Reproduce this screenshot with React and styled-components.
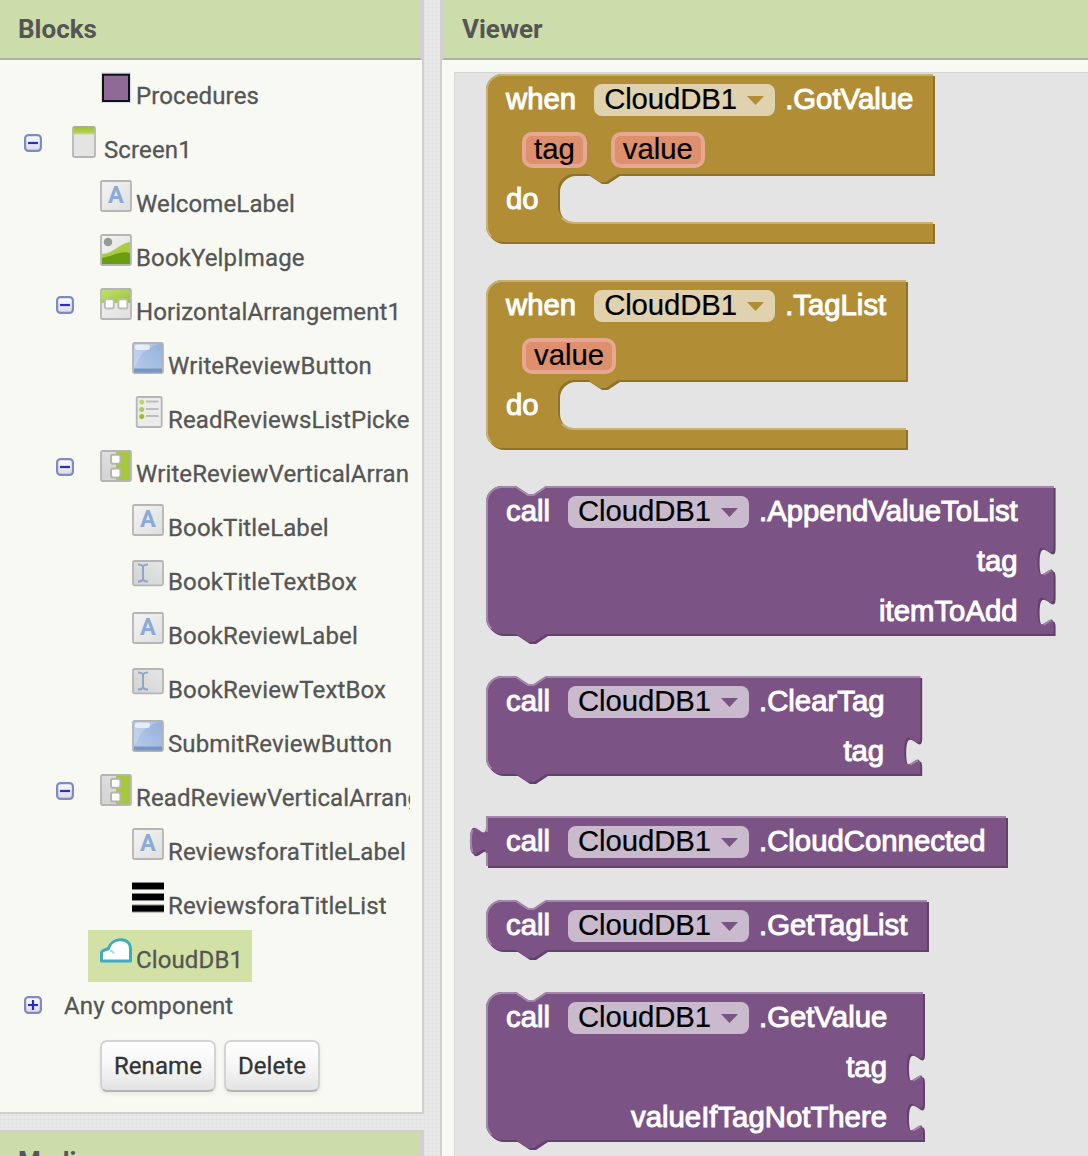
import React from "react";
import styled, { createGlobalStyle } from "styled-components";

const Global = createGlobalStyle`
  * { box-sizing: border-box; }
  body { margin: 0; background: #e8e8e8; }
`;

const Page = styled.div`
  width: 1088px;
  height: 1156px;
  overflow: hidden;
  display: flex;
  gap: 16px;
  font-family: Roboto, "Liberation Sans", sans-serif;
  color: #555;
  background-color: #e9e9e9;
  background-image:
    repeating-linear-gradient(90deg, rgba(0, 0, 0, 0.025) 0 1px, transparent 1px 4px),
    repeating-linear-gradient(0deg, rgba(0, 0, 0, 0.025) 0 1px, transparent 1px 4px);
`;

const Sidebar = styled.div`
  width: 424px;
  flex: none;
  display: flex;
  flex-direction: column;
  gap: 16px;
`;

const BlocksPanel = styled.section`
  height: 1114px;
  flex: none;
  display: flex;
  flex-direction: column;
  background: #f8f9f3;
  border-right: 2px solid #d0d0d0;
  border-bottom: 2px solid #d0d0d0;
`;

const MediaPanel = styled.section`
  height: 100px;
  flex: none;
  border-top: 2px solid #d0d0d0;
  border-right: 2px solid #d0d0d0;
`;

const ViewerPanel = styled.section`
  flex: 1;
  display: flex;
  flex-direction: column;
  background: #f8f9f3;
  border-left: 2px solid #d0d0d0;
`;

const PanelTitle = styled.h2`
  margin: 0;
  flex: none;
  height: 60px;
  padding-left: 18px;
  background: #ccddab;
  border-bottom: 2px solid #aeb1a6;
  border-right: ${(p) => (p.$side === "right" ? "2px solid #d0d0d0" : "0")};
  border-left: ${(p) => (p.$side === "left" ? "2px solid #d0d0d0" : "0")};
  font-size: 26px;
  font-weight: 700;
  line-height: 58px;
`;

const Tree = styled.div`
  width: 410px;
  padding-top: 5px;
  overflow: hidden;
`;

const TreeRow = styled.div`
  display: flex;
  height: ${(p) => (p.$plain ? 46 : 54)}px;
  padding-left: ${(p) => 24 + 32 * p.$depth}px;
`;

const ToggleSlot = styled.div`
  flex: none;
  width: 32px;
  padding-top: ${(p) => (p.$plain ? 13 : 15)}px;
  line-height: 0;
`;

const TreeItem = styled.div`
  flex: none;
  display: flex;
  gap: 4px;
  height: ${(p) => (p.$plain ? 46 : 52)}px;
  margin-top: 1px;
  padding: 0 9px 0 ${(p) => (p.$plain ? 8 : 12)}px;
  background: ${(p) => (p.$selected ? "#d2e1a6" : "transparent")};
`;

const IconBox = styled.svg`
  flex: none;
  display: block;
  width: 32px;
  height: 32px;
  margin-top: 6px;
`;

const ItemText = styled.span`
  font-size: 24px;
  line-height: 28px;
  letter-spacing: 0.12px;
  -webkit-text-stroke: 0.3px #555;
  padding-top: ${(p) => (p.$plain ? 8 : 16)}px;
  white-space: nowrap;
`;

const Buttons = styled.div`
  display: flex;
  gap: 8px;
  padding: 11px 0 0 100px;
`;

const Button = styled.button`
  height: 52px;
  width: ${(p) => p.$width}px;
  padding: 0;
  border: 2px solid #d3d3d1;
  border-bottom-color: #b4b4b2;
  border-radius: 7px;
  background: linear-gradient(#ffffff, #f6f6f6 50%, #e3e3e3);
  box-shadow: 0 2px 4px rgba(0, 0, 0, 0.07);
  color: #333;
  font: 400 24px Roboto, sans-serif;
  letter-spacing: 0.1px;
  -webkit-text-stroke: 0.3px #333;
  text-align: center;
`;

const Workspace = styled.div`
  flex: 1;
  position: relative;
  margin: 12px 0 0 12px;
  overflow: hidden;
  background: #e4e4e4;
  border-top: 1px solid #d6d6d6;
  border-left: 1px solid #d6d6d6;
`;

/* Blocks float freely on the workspace canvas. */
const BlockFrame = styled.div`
  position: absolute;
  left: 31px;
  top: ${(p) => p.$top}px;
  width: ${(p) => p.$width}px;
  font-family: "Liberation Sans", Arial, sans-serif;
  font-size: 29.33px;
  color: #fff;
`;

const BlockShape = styled.svg`
  position: absolute;
  left: -20px;
  top: 0;
  overflow: visible;
`;

const BlockRow = styled.div`
  position: relative;
  display: flex;
  height: 50px;
  line-height: 50px;
  padding-left: ${(p) => (p.$params ? 36 : 20)}px;
  padding-right: ${(p) => (p.$input ? 36 : 0)}px;
  justify-content: ${(p) => (p.$input ? "flex-end" : "flex-start")};
  gap: ${(p) => (p.$params ? 24 : 0)}px;
`;

const BlockLabel = styled.span`
  white-space: pre;
  -webkit-text-stroke: 1px #fff;
`;

const Dropdown = styled.span`
  flex: none;
  display: flex;
  align-items: center;
  justify-content: space-between;
  width: 181px;
  height: 32px;
  margin: 10px 10px 0 18px;
  padding: 0 11px 0 10px;
  border-radius: 8px;
  background: rgba(255, 255, 255, 0.6);
  color: #000;
  line-height: 30px;
`;

const DropdownText = styled.span`
  height: 32px;
  letter-spacing: -0.1px;
  -webkit-text-stroke: 0.2px #000;
`;

const Arrow = styled.svg`
  display: block;
  margin-top: 1px;
  fill: ${(p) => p.$fill};
`;

const Param = styled.span`
  height: 36px;
  margin-top: 8px;
  padding: 0 8px;
  border: 4px solid #e7a893;
  border-radius: 10px;
  background: #de8f6c;
  background-clip: padding-box;
  color: #000;
  line-height: 26px;
  -webkit-text-stroke: 0.2px #000;
`;

const gold = { main: "#b18e35", dark: "#8e722a", light: "#c8b072" };
const purple = { main: "#7c5385", dark: "#63426a", light: "#a387aa" };

function Shape({ kind, w, inputs, colors }) {
  let body;
  let light;
  if (kind === "event") {
    body = `M0,8A8,8 0 0 1 8,0H${w}V50H66l-6,4 -3,0 -6,-4h-7a8,8 0 0 0 -8,8v8a8,8 0 0 0 8,8H${w}V84H8a8,8 0 0 1 -8,-8z`;
    light = `M.5,7.5A7.5,7.5 0 0 1 8,.5H${w}M38,72A8.5,8.5 0 0 0 44,74.5H${w}M2.7,81.3A7.5,7.5 0 0 1 .5,76V7.5`;
  } else if (kind === "value") {
    body = `M0,0H${w}V25H0V20c0,-10 -8,8 -8,-7.5s8,2.5 8,-7.5z`;
    light = `M0,.5H${w}M.5,25V18.5m-7.36,-.5q-1.52,-5.5 0,-11m7.36,1V.5`;
  } else {
    const h = inputs ? 24 + 25 * inputs : 25;
    let tabs = "";
    let glints = "";
    for (let i = 1; i <= inputs; i += 1) {
      tabs += `V${25 * i + 5}c0,10 -8,-8 -8,7.5s8,-2.5 8,7.5`;
      glints += `M${w - 5},${25 * i + 19.3}l3.68,-2.1`;
    }
    body = `M0,8A8,8 0 0 1 8,0H15l6,4 3,0 6,-4H${w}${tabs}V${h}H30l-6,4 -3,0 -6,-4H8a8,8 0 0 1 -8,-8z`;
    light = `M.5,7.5A7.5,7.5 0 0 1 8,.5H15l6,4 3,0 6,-4H${w}${glints}M2.7,${h - 2.7}A7.5,7.5 0 0 1 .5,${h - 8}V7.5`;
  }
  return (
    <BlockShape width={w * 2 + 24} height="178" aria-hidden="true">
      <g transform="translate(20 0) scale(2)">
        <path d={body} fill={colors.dark} transform="translate(1 1)" />
        <path d={body} fill={colors.main} />
        <path d={light} fill="none" stroke={colors.light} strokeWidth="1" />
      </g>
    </BlockShape>
  );
}

function Block({ top, w, kind, method, params, inputs = [] }) {
  const isEvent = kind === "event";
  const colors = isEvent ? gold : purple;
  return (
    <BlockFrame $top={top - 73} $width={w * 2}>
      <Shape kind={kind} w={w} inputs={inputs.length} colors={colors} />
      <BlockRow>
        <BlockLabel>{isEvent ? "when" : "call"}</BlockLabel>
        <Dropdown>
          <DropdownText>CloudDB1</DropdownText>
          <Arrow width="17" height="9" $fill={colors.main}>
            <path d="M0 0H17L8.5 9z" />
          </Arrow>
        </Dropdown>
        <BlockLabel>{method}</BlockLabel>
      </BlockRow>
      {params && (
        <BlockRow $params>
          {params.map((p) => (
            <Param key={p}>{p}</Param>
          ))}
        </BlockRow>
      )}
      {isEvent && (
        <BlockRow>
          <BlockLabel>do</BlockLabel>
        </BlockRow>
      )}
      {inputs.map((name) => (
        <BlockRow key={name} $input>
          <BlockLabel>{name}</BlockLabel>
        </BlockRow>
      ))}
    </BlockFrame>
  );
}

function Toggle({ open }) {
  return (
    <svg width="18" height="18" viewBox="0 0 18 18">
      <rect x="1.100" y="1.100" width="15.800" height="15.800" rx="3.500" fill="url(#toggleFill)" stroke="#7d8ac4" strokeWidth="2.200" />
      <path d={open ? "M4 9H14" : "M4 9H14M9 4V14"} stroke="#2b2bd6" strokeWidth="2.200" />
    </svg>
  );
}

const Tile = ({ x = 1, y = 1, w = 30, h = 30, fill = "url(#tile)" }) => (
  <rect x={x} y={y} width={w} height={h} rx="1.5" fill={fill} stroke="#b5b5b5" strokeWidth="1.8" />
);

function IconDefs() {
  return (
    <svg width="0" height="0" style={{ display: "block" }} aria-hidden="true">
      <defs>
        <linearGradient id="toggleFill" x1="0" y1="0" x2="0" y2="1">
          <stop offset="0" stopColor="#fff" />
          <stop offset="1" stopColor="#d9d9e0" />
        </linearGradient>
        <linearGradient id="tile" x1="0" y1="0" x2="1" y2="1">
          <stop offset="0" stopColor="#f4f4f4" />
          <stop offset="1" stopColor="#dedede" />
        </linearGradient>
        <linearGradient id="tileGrey" x1="0" y1="1" x2="1" y2="0">
          <stop offset="0" stopColor="#d2d2d2" />
          <stop offset="1" stopColor="#e6e6e6" />
        </linearGradient>
        <linearGradient id="screenTop" x1="0" y1="0" x2="0" y2="1">
          <stop offset="0" stopColor="#a0c52f" />
          <stop offset=".6" stopColor="#afcf52" />
          <stop offset="1" stopColor="#e4e4e4" />
        </linearGradient>
        <linearGradient id="lime" x1="0" y1="0" x2="1" y2="1">
          <stop offset="0" stopColor="#c0e070" />
          <stop offset="1" stopColor="#9cc334" />
        </linearGradient>
        <linearGradient id="blue" x1="0" y1="1" x2="1" y2="0">
          <stop offset="0" stopColor="#b9cdea" />
          <stop offset="1" stopColor="#94b0da" />
        </linearGradient>
      </defs>
    </svg>
  );
}

const icons = {
  procedures: (
    <>
      <rect x="1" y=".5" width="30" height="30.5" fill="#d3dcf3" />
      <rect x="3" y="2.7" width="26" height="26.3" fill="#8f6997" stroke="#111" strokeWidth="2" />
    </>
  ),
  screen: (
    <>
      <Tile x={5} w={22} h={30} fill="#e4e4e4" />
      <rect x="5.8" y="1.5" width="20.4" height="8" fill="url(#screenTop)" />
      <path d="M5.5 1H26.5" stroke="#a9ad9c" strokeWidth="1.8" />
    </>
  ),
  label: (
    <>
      <Tile />
      <text x="15.8" y="23.2" textAnchor="middle" fontFamily="Roboto" fontWeight="700" fontSize="23.5" fill="#8aaad8">
        A
      </text>
    </>
  ),
  image: (
    <>
      <Tile />
      <circle cx="8" cy="8" r="4.3" fill="#999" />
      <path d="M2 20C13 20 18 10 30 8V30H2z" fill="#a8cc42" />
      <path d="M2 24C12 22 16 19 22 18.500C26 18 28 18.500 30 19.500V30H2z" fill="#6b9c12" />
    </>
  ),
  horizontal: (
    <>
      <Tile />
      <path d="M2 2H30V15H2z" fill="url(#lime)" />
      <rect x="4.800" y="11.200" width="9" height="9.400" rx="2" fill="#fff" stroke="#bdbdb4" strokeWidth="2" />
      <rect x="18.400" y="11.200" width="9" height="9.400" rx="2" fill="#fff" stroke="#bdbdb4" strokeWidth="2" />
    </>
  ),
  vertical: (
    <>
      <Tile fill="url(#tileGrey)" />
      <path d="M16 2H30V30H16z" fill="#a5c93d" />
      <rect x="11" y="4.800" width="9.400" height="9" rx="2" fill="#fff" stroke="#b5b5ad" strokeWidth="2" />
      <rect x="11" y="18.500" width="9.400" height="9" rx="2" fill="#fff" stroke="#b5b5ad" strokeWidth="2" />
    </>
  ),
  button: (
    <>
      <Tile fill="url(#blue)" />
      <path d="M2 2H27C16 5 8 12 6 20L2 25z" fill="#fff" opacity=".22" />
      <rect x="2" y="26.500" width="28" height="4" fill="#7795c8" />
      <rect x="3" y="2.500" width="15" height="5.500" rx="2.500" fill="#fff" opacity=".65" />
    </>
  ),
  list: (
    <>
      <Tile x={4.700} w={25} fill="#ebebeb" />
      {[6, 13.5, 20.5].map((y, i) => (
        <React.Fragment key={y}>
          <circle cx="9.700" cy={y} r="2.500" fill={["#b4db5c", "#a9d04c", "#98c030"][i]} />
          <path d={`M14 ${y - 0.5}H26.500`} stroke="#bcbcbc" strokeWidth="2" />
        </React.Fragment>
      ))}
    </>
  ),
  textbox: (
    <>
      <Tile y={3} h={24.3} fill="url(#tileGrey)" />
      <path d="M6 6.500Q10 6.500 11 8.500Q12 6.500 16 6.500M11 8V21.500M6 23.500Q10 23.500 11 21.500Q12 23.500 16 23.500" fill="none" stroke="#8fa6cb" strokeWidth="2" />
    </>
  ),
  bars: (
    <>
      <path d="M0 4H32M0 15H32M0 26.500H32" stroke="#888" strokeWidth="7.800" />
      <path d="M0 4H32M0 15H32M0 26.500H32" stroke="#000" strokeWidth="6" />
    </>
  ),
  cloud: (
    <>
      <path
        d="M1.500 25V16.500C1.500 14.800 5 14 8.500 12.500C10 7 15 4 20 3.800C27 3.500 30.500 7.500 30.500 13V25z"
        fill="#fff"
        stroke="#3fabc0"
        strokeWidth="3"
        strokeLinejoin="round"
      />
      <path d="M10 14.500Q13 15 14 17.500" fill="none" stroke="#9fdbe8" strokeWidth="2" />
    </>
  ),
};

const rows = [
  { depth: 1, icon: "procedures", text: "Procedures" },
  { depth: 0, icon: "screen", text: "Screen1", toggle: true },
  { depth: 1, icon: "label", text: "WelcomeLabel" },
  { depth: 1, icon: "image", text: "BookYelpImage" },
  { depth: 1, icon: "horizontal", text: "HorizontalArrangement1", toggle: true },
  { depth: 2, icon: "button", text: "WriteReviewButton" },
  { depth: 2, icon: "list", text: "ReadReviewsListPicker" },
  { depth: 1, icon: "vertical", text: "WriteReviewVerticalArrangement", toggle: true },
  { depth: 2, icon: "label", text: "BookTitleLabel" },
  { depth: 2, icon: "textbox", text: "BookTitleTextBox" },
  { depth: 2, icon: "label", text: "BookReviewLabel" },
  { depth: 2, icon: "textbox", text: "BookReviewTextBox" },
  { depth: 2, icon: "button", text: "SubmitReviewButton" },
  { depth: 1, icon: "vertical", text: "ReadReviewVerticalArrangement", toggle: true },
  { depth: 2, icon: "label", text: "ReviewsforaTitleLabel" },
  { depth: 2, icon: "bars", text: "ReviewsforaTitleList" },
  { depth: 1, icon: "cloud", text: "CloudDB1", selected: true },
];

export default function App() {
  return (
    <>
      <Global />
      <IconDefs />
      <Page>
        <Sidebar>
          <BlocksPanel>
            <PanelTitle $side="right">Blocks</PanelTitle>
            <Tree>
              {rows.map((r) => (
                <TreeRow key={r.text} $depth={r.depth}>
                  <ToggleSlot>{r.toggle && <Toggle open />}</ToggleSlot>
                  <TreeItem $selected={r.selected}>
                    <IconBox viewBox="0 0 32 32">{icons[r.icon]}</IconBox>
                    <ItemText>{r.text}</ItemText>
                  </TreeItem>
                </TreeRow>
              ))}
              <TreeRow $depth={0} $plain>
                <ToggleSlot $plain>
                  <Toggle />
                </ToggleSlot>
                <TreeItem $plain>
                  <ItemText $plain>Any component</ItemText>
                </TreeItem>
              </TreeRow>
            </Tree>
            <Buttons>
              <Button $width={116}>Rename</Button>
              <Button $width={96}>Delete</Button>
            </Buttons>
          </BlocksPanel>
          <MediaPanel>
            <PanelTitle $side="right">Media</PanelTitle>
          </MediaPanel>
        </Sidebar>
        <ViewerPanel>
          <PanelTitle $side="left">Viewer</PanelTitle>
          <Workspace>
            <Block kind="event" top={74} w={223.5} method=".GotValue" params={["tag", "value"]} />
            <Block kind="event" top={280} w={210} method=".TagList" params={["value"]} />
            <Block kind="call" top={486} w={283.8} method=".AppendValueToList" inputs={["tag", "itemToAdd"]} />
            <Block kind="call" top={676} w={217.1} method=".ClearTag" inputs={["tag"]} />
            <Block kind="value" top={816} w={260} method=".CloudConnected" />
            <Block kind="call" top={900} w={220.5} method=".GetTagList" />
            <Block kind="call" top={992} w={218.5} method=".GetValue" inputs={["tag", "valueIfTagNotThere"]} />
          </Workspace>
        </ViewerPanel>
      </Page>
    </>
  );
}
